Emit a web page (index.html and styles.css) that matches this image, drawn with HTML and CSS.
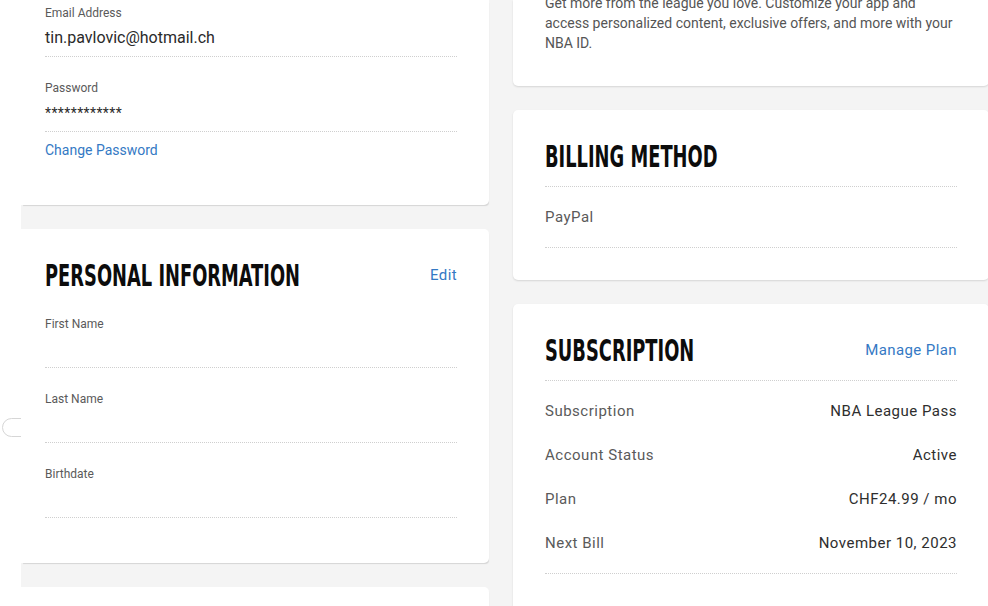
FILE: index.html
```html
<!DOCTYPE html>
<html lang="en">
<head>
<meta charset="utf-8">
<title>Account</title>
<link rel="stylesheet" href="styles.css">
</head>
<body>
<div class="page">
  <div class="col col-left">
    <section class="card card-top-left">
      <div class="field">
        <div class="label">Email Address</div>
        <div class="value">tin.pavlovic@hotmail.ch</div>
      </div>
      <div class="field">
        <div class="label">Password</div>
        <div class="value pw">************</div>
      </div>
      <a class="link change-pw" href="#">Change Password</a>
    </section>
    <section class="card card-personal">
      <div class="card-head">
        <h2 class="title">Personal Information</h2>
        <a class="link head-link" href="#">Edit</a>
      </div>
      <div class="field">
        <div class="label">First Name</div>
        <div class="value"></div>
      </div>
      <div class="field">
        <div class="label">Last Name</div>
        <div class="value"></div>
      </div>
      <div class="field">
        <div class="label">Birthdate</div>
        <div class="value"></div>
      </div>
    </section>
    <section class="card card-stub"></section>
  </div>
  <div class="col col-right">
    <section class="card card-top-right">
      <p class="intro">Get more from the league you love. Customize your app and access personalized content, exclusive offers, and more with your NBA ID.</p>
    </section>
    <section class="card card-billing">
      <div class="card-head ruled">
        <h2 class="title">Billing Method</h2>
      </div>
      <div class="rows">
        <div class="row"><span class="row-label">PayPal</span></div>
      </div>
    </section>
    <section class="card card-sub">
      <div class="card-head ruled">
        <h2 class="title">Subscription</h2>
        <a class="link head-link" href="#">Manage Plan</a>
      </div>
      <div class="rows">
        <div class="row"><span class="row-label">Subscription</span><span class="row-value">NBA League Pass</span></div>
        <div class="row"><span class="row-label">Account Status</span><span class="row-value">Active</span></div>
        <div class="row"><span class="row-label">Plan</span><span class="row-value">CHF24.99 / mo</span></div>
        <div class="row"><span class="row-label">Next Bill</span><span class="row-value">November 10, 2023</span></div>
      </div>
    </section>
  </div>
  <span class="edge-toggle"></span>
</div>
</body>
</html>
```

FILE: styles.css
```css
* { box-sizing: border-box; }
html, body { margin: 0; padding: 0; }
body {
  font-family: Roboto, "Liberation Sans", Arial, sans-serif;
  color: #222;
  background: #fff;
  overflow: hidden;
}
.page {
  position: relative;
  display: grid;
  grid-template-columns: 468px 476px;
  column-gap: 24px;
  padding-left: 21px;
  min-height: 606px;
  background: linear-gradient(to right, #fff 21px, #f4f4f4 21px);
}
.col {
  position: relative;
  z-index: 1;
  display: flex;
  flex-direction: column;
  gap: 24px;
}
.card {
  background: #fff;
  border-radius: 5px;
  box-shadow: 0 1px 2px rgba(0,0,0,0.13);
  padding: 28px 32px 44px;
}
.col-left .card {
  padding-left: 24px;
  border-top-left-radius: 0;
  border-bottom-left-radius: 0;
  box-shadow: 1px 2px 1px -1px rgba(0,0,0,0.13);
}
.card-top-left {
  border-top-right-radius: 0;
  padding-top: 5px !important;
  height: 205px;
}
.card-top-right {
  border-top-left-radius: 0;
  border-top-right-radius: 0;
  padding-top: 0;
  padding-bottom: 33px;
  height: 86px;
}
.card-stub { height: 40px; }
.card-personal { padding-bottom: 45px; }
.card-billing { padding-bottom: 32px; }
.card-sub { padding-bottom: 40px; }

.field {
  border-bottom: 1px dotted #cfcfcf;
  padding-bottom: 7px;
  margin-bottom: 23px;
}
.field:last-of-type { margin-bottom: 0; }
.label {
  font-size: 12px;
  line-height: 16px;
  color: #5a5a5a;
  margin-bottom: 4px;
}
.value {
  font-size: 16px;
  line-height: 24px;
  height: 24px;
  color: #2a2a2a;
  padding-top: 1px;
}
.value.pw {
  font-size: 14px;
  letter-spacing: 0.4px;
}
.card-top-left .field { margin-bottom: 23px; }
.card-top-left .field + .field { margin-bottom: 8px; }

.link {
  color: #3479c4;
  text-decoration: none;
}
.change-pw {
  display: block;
  font-size: 14px;
  line-height: 20px;
}
.card-head {
  display: flex;
  align-items: center;
  height: 36px;
  margin-bottom: 23px;
}
.card-head.ruled {
  box-sizing: content-box;
  padding-bottom: 12px;
  border-bottom: 1px dotted #cfcfcf;
  margin-bottom: 18px;
}
.title {
  flex: 1 1 0;
  min-width: 0;
  margin: 0;
  font-family: "Liberation Sans Narrow", "DejaVu Sans Condensed", "Liberation Sans", sans-serif;
  font-weight: 700;
  font-size: 31px;
  line-height: 36px;
  text-transform: uppercase;
  color: #0c0c0c;
  white-space: nowrap;
  transform: scaleX(0.64);
  transform-origin: left center;
}
.head-link {
  flex: none;
  font-size: 15px;
  letter-spacing: 0.4px;
}
.intro {
  margin: -7px -2px 0 0;
  font-size: 14px;
  line-height: 20px;
  color: #555;
}
.rows {
  display: flex;
  flex-direction: column;
  gap: 20px;
  padding-bottom: 18px;
  border-bottom: 1px dotted #cfcfcf;
}
.row {
  display: flex;
  justify-content: space-between;
  font-size: 15px;
  line-height: 24px;
  letter-spacing: 0.5px;
}
.row-label { color: #5a5a5a; }
.row-value { color: #2e2e2e; }
.edge-toggle {
  position: absolute;
  left: 2px;
  top: 418px;
  width: 36px;
  height: 19px;
  border: 1px solid #d6d6d6;
  border-radius: 10px;
  background: #fff;
  z-index: 0;
}
```
